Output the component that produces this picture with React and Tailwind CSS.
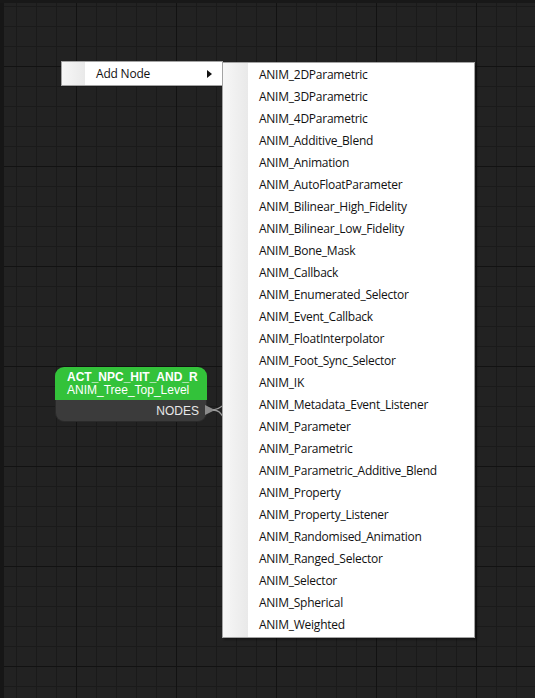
import React from "react";

const NODE_TYPES = [
  "ANIM_2DParametric",
  "ANIM_3DParametric",
  "ANIM_4DParametric",
  "ANIM_Additive_Blend",
  "ANIM_Animation",
  "ANIM_AutoFloatParameter",
  "ANIM_Bilinear_High_Fidelity",
  "ANIM_Bilinear_Low_Fidelity",
  "ANIM_Bone_Mask",
  "ANIM_Callback",
  "ANIM_Enumerated_Selector",
  "ANIM_Event_Callback",
  "ANIM_FloatInterpolator",
  "ANIM_Foot_Sync_Selector",
  "ANIM_IK",
  "ANIM_Metadata_Event_Listener",
  "ANIM_Parameter",
  "ANIM_Parametric",
  "ANIM_Parametric_Additive_Blend",
  "ANIM_Property",
  "ANIM_Property_Listener",
  "ANIM_Randomised_Animation",
  "ANIM_Ranged_Selector",
  "ANIM_Selector",
  "ANIM_Spherical",
  "ANIM_Weighted",
];

const font = { fontFamily: '"Open Sans", "Noto Sans", sans-serif' };
const nodeFont = { fontFamily: '"Liberation Sans", Arial, sans-serif' };

function GridCanvas() {
  return (
    <svg className="absolute inset-0" width="535" height="698">
      <defs>
        <pattern id="minor" x="16" y="6" width="20" height="20" patternUnits="userSpaceOnUse">
          <path d="M0.5 0V20M0 0.5H20" stroke="#1a1a1a" strokeWidth="1" fill="none" />
        </pattern>
        <pattern id="major" x="76" y="66" width="100" height="100" patternUnits="userSpaceOnUse">
          <path d="M0.5 0V100M0 0.5H100" stroke="#121212" strokeWidth="1" fill="none" />
        </pattern>
      </defs>
      <rect width="535" height="698" fill="#222222" />
      <rect width="535" height="698" fill="url(#minor)" />
      <rect width="535" height="698" fill="url(#major)" />
      <rect x="0" y="0" width="4" height="698" fill="#161616" />
      <rect x="0" y="0" width="535" height="3" fill="#181818" />
    </svg>
  );
}

function GraphNode() {
  return (
    <div className="absolute left-[55px] top-[367px] w-[152px]">
      <div className="rounded-t-[9px] bg-[#33c23a] px-[12px] pt-[4px] pb-[3px] text-white leading-[13px]">
        <div className="text-[12px] font-bold" style={nodeFont}>
          ACT_NPC_HIT_AND_R
        </div>
        <div className="text-[12px]" style={nodeFont}>
          ANIM_Tree_Top_Level
        </div>
      </div>
      <div className="flex h-[22px] items-center justify-end rounded-b-[9px] border border-t-0 border-[#2a2a2a] bg-[#3b3b3b] pr-[7px]">
        <span className="text-[12px] text-[#e8e8e8]" style={nodeFont}>
          NODES
        </span>
      </div>
    </div>
  );
}

function Wire() {
  return (
    <svg className="absolute left-[200px] top-[400px]" width="30" height="30">
      <path d="M5 5 L15 10 L5 15 Z" fill="#8a8a8a" />
      <path d="M13 10 C18 10 20 12 24 18" stroke="#9a9a9a" strokeWidth="1.4" fill="none" />
      <path d="M13 10 C18 9 20 8 24 5" stroke="#9a9a9a" strokeWidth="1.2" fill="none" />
    </svg>
  );
}

export default function App() {
  return (
    <div className="relative h-[698px] w-[535px] overflow-hidden" style={font}>
      <GridCanvas />
      <GraphNode />
      <Wire />

      {/* context menu */}
      <div className="absolute left-[61px] top-[61px] flex h-[25px] w-[162px] border border-[#a3a3a3] bg-white">
        <div className="w-[23px] shrink-0 bg-gradient-to-r from-[#f7f7f7] to-[#e9e9e9]" />
        <div className="flex flex-1 items-center pl-[11px] pr-[10px] text-[12px] tracking-[-0.2px] text-[#111]">
          <span>Add Node</span>
          <svg className="ml-auto" width="5" height="8" viewBox="0 0 5 8">
            <path d="M0 0 L5 4 L0 8 Z" fill="#111" />
          </svg>
        </div>
      </div>

      {/* submenu */}
      <div className="absolute left-[222px] top-[62px] flex h-[576px] w-[253px] border border-[#a3a3a3] bg-white shadow-[2px_2px_2px_rgba(0,0,0,0.35)]">
        <div className="w-[25px] shrink-0 bg-gradient-to-r from-[#f7f7f7] to-[#e9e9e9]" />
        <ul className="flex-1 pt-[1px]">
          {NODE_TYPES.map((name) => (
            <li key={name} className="flex h-[22px] items-center pl-[11px] text-[12px] tracking-[-0.25px] text-[#111]">
              {name}
            </li>
          ))}
        </ul>
      </div>
    </div>
  );
}
